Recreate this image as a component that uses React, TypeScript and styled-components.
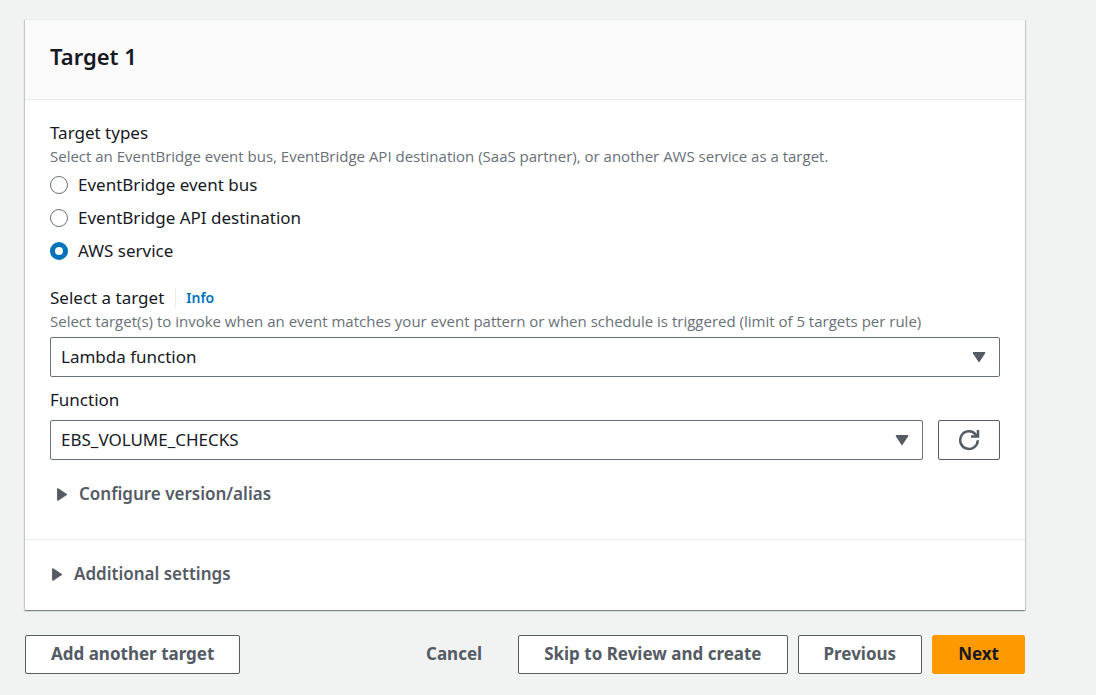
import React, { useState } from "react";
import styled, { createGlobalStyle } from "styled-components";

const GlobalStyle = createGlobalStyle`
  *, *::before, *::after { box-sizing: border-box; }
  body {
    margin: 0;
    background: #f1f3f3;
    color: #16191f;
    font-family: "Noto Sans", "Open Sans", sans-serif;
    font-size: 17px;
    line-height: 24px;
  }
  html { background: #f1f3f3; }
  button, select, input { font: inherit; color: inherit; }
`;

const Page = styled.main`
  display: flex;
  flex-direction: column;
  gap: 25px;
  padding: 19px 71px 20px 25px;
`;

const Card = styled.section`
  background: #fff;
  border-top: 1px solid #eaeded;
  box-shadow: 0 1px 1px 0 rgba(0, 28, 36, 0.3), 1px 1px 1px 0 rgba(0, 28, 36, 0.15),
    -1px 1px 1px 0 rgba(0, 28, 36, 0.15);
`;

const CardHeader = styled.header`
  padding: 21px 25px 27px;
  background: #fafafa;
  border-bottom: 1px solid #eaeded;
`;

const Title = styled.h2`
  margin: 0;
  font-size: 22px;
  font-weight: 600;
  line-height: 31px;
`;

const CardBody = styled.div`
  padding: 21px 25px 33px;
`;

const CardFooter = styled.footer`
  padding: 22px 25px 24px;
  border-top: 1px solid #eaeded;
`;

const RadioGroup = styled.fieldset`
  min-width: 0;
  margin: 0 0 23px;
  padding: 0;
  border: 0;
`;

const Legend = styled.legend`
  padding: 0;
`;

const Description = styled.p`
  margin: 1px 0 0;
  color: #687078;
  font-family: "Open Sans", "Noto Sans", sans-serif;
  font-size: 15px;
  line-height: 20px;
`;

const RadioList = styled.div`
  display: flex;
  flex-direction: column;
  gap: 9px;
  margin-top: 7px;
`;

const RadioLabel = styled.label`
  display: flex;
  align-items: center;
  gap: 10px;
`;

const Radio = styled.input.attrs({ type: "radio" })`
  appearance: none;
  width: 18px;
  height: 18px;
  margin: 0;
  border: 1px solid #687078;
  border-radius: 50%;
  background: #fff;

  &:checked {
    border: 5px solid #0073bb;
  }
`;

const LabelRow = styled.div`
  display: flex;
  align-items: center;
  gap: 11px;
`;

const InfoLink = styled.a`
  padding-left: 10px;
  border-left: 1px solid #eaeded;
  color: #0073bb;
  font-size: 14px;
  font-weight: 600;
  line-height: 20px;
  text-decoration: none;
`;

const SelectBox = styled.div<{ $gap: number }>`
  display: grid;
  flex: 1;
  align-items: center;
  margin-top: ${({ $gap }) => $gap}px;

  > * {
    grid-area: 1 / 1;
  }

  > svg {
    justify-self: end;
    margin-right: 14px;
    pointer-events: none;
  }
`;

const Select = styled.select`
  appearance: none;
  width: 100%;
  height: 40px;
  padding: 0 40px 1px 10px;
  border: 1px solid #687078;
  border-radius: 2px;
  background: #fff;
`;

const FunctionLabel = styled.label`
  display: block;
  margin-top: 11px;
`;

const FunctionRow = styled.div`
  display: flex;
  align-items: flex-end;
  gap: 15px;
`;

const Button = styled.button<{ $kind?: "primary" | "link" }>`
  height: 39px;
  padding: 0 25px 1px;
  border: 1px solid
    ${({ $kind }) => ($kind === "primary" ? "#ff9900" : $kind === "link" ? "transparent" : "#545b64")};
  border-radius: 2px;
  background: ${({ $kind }) => ($kind === "primary" ? "#ff9900" : $kind === "link" ? "transparent" : "#fff")};
  color: ${({ $kind }) => ($kind === "primary" ? "#16191f" : "#545b64")};
  font-weight: 700;
  white-space: nowrap;
  cursor: pointer;
`;

const IconButton = styled(Button)`
  display: grid;
  place-items: center;
  width: 62px;
  height: 40px;
  padding: 0;
`;

const Expander = styled.button<{ $indented?: boolean }>`
  display: flex;
  align-items: center;
  gap: 6px;
  margin: ${({ $indented }) => ($indented ? "22px 0 0 5px" : "0")};
  padding: 0;
  border: 0;
  background: none;
  color: #545b64;
  font-weight: 600;
  cursor: pointer;
`;

const Actions = styled.div`
  display: flex;
  justify-content: space-between;
`;

const ActionGroup = styled.div`
  display: flex;
  gap: 10px;
`;

const CaretDown = () => (
  <svg width="14" height="12" viewBox="0 0 14 12" aria-hidden="true">
    <path d="M1.4 1.8h11.2L7 10.4z" fill="#545b64" stroke="#545b64" strokeWidth="1.4" strokeLinejoin="round" />
  </svg>
);

const CaretRight = () => (
  <svg width="18" height="14" viewBox="0 0 18 14" aria-hidden="true">
    <path d="M2.8 1.9v11.2L11.4 7.5z" fill="#545b64" stroke="#545b64" strokeWidth="1.4" strokeLinejoin="round" />
  </svg>
);

const RefreshIcon = () => (
  <svg width="22" height="22" viewBox="0 0 22 22" fill="none" stroke="#545b64" strokeWidth="2.5" aria-hidden="true">
    <path d="M19.8 11.2A8.8 8.8 0 1 1 17.6 5.3L19 7" />
    <path d="M20 1v6.6h-7" />
  </svg>
);

const TARGET_TYPES = ["EventBridge event bus", "EventBridge API destination", "AWS service"];

export default function App() {
  const [type, setType] = useState("AWS service");

  return (
    <>
      <GlobalStyle />
      <Page>
        <Card>
          <CardHeader>
            <Title>Target 1</Title>
          </CardHeader>
          <CardBody>
            <RadioGroup>
              <Legend>Target types</Legend>
              <Description>
                Select an EventBridge event bus, EventBridge API destination (SaaS partner), or another AWS service as a
                target.
              </Description>
              <RadioList>
                {TARGET_TYPES.map((name) => (
                  <RadioLabel key={name}>
                    <Radio name="target-type" value={name} checked={type === name} onChange={() => setType(name)} />
                    {name}
                  </RadioLabel>
                ))}
              </RadioList>
            </RadioGroup>

            <LabelRow>
              <label htmlFor="target">Select a target</label>
              <InfoLink href="#info">Info</InfoLink>
            </LabelRow>
            <Description id="target-hint">
              Select target(s) to invoke when an event matches your event pattern or when schedule is triggered (limit
              of 5 targets per rule)
            </Description>
            <SelectBox $gap={6}>
              <Select id="target" aria-describedby="target-hint">
                <option>Lambda function</option>
              </Select>
              <CaretDown />
            </SelectBox>

            <FunctionLabel htmlFor="function">Function</FunctionLabel>
            <FunctionRow>
              <SelectBox $gap={8}>
                <Select id="function">
                  <option>EBS_VOLUME_CHECKS</option>
                </Select>
                <CaretDown />
              </SelectBox>
              <IconButton type="button" aria-label="Refresh functions">
                <RefreshIcon />
              </IconButton>
            </FunctionRow>

            <Expander type="button" aria-expanded="false" $indented>
              <CaretRight />
              Configure version/alias
            </Expander>
          </CardBody>
          <CardFooter>
            <Expander type="button" aria-expanded="false">
              <CaretRight />
              Additional settings
            </Expander>
          </CardFooter>
        </Card>

        <Actions>
          <Button type="button">Add another target</Button>
          <ActionGroup>
            <Button type="button" $kind="link">
              Cancel
            </Button>
            <Button type="button">Skip to Review and create</Button>
            <Button type="button">Previous</Button>
            <Button type="button" $kind="primary">
              Next
            </Button>
          </ActionGroup>
        </Actions>
      </Page>
    </>
  );
}
